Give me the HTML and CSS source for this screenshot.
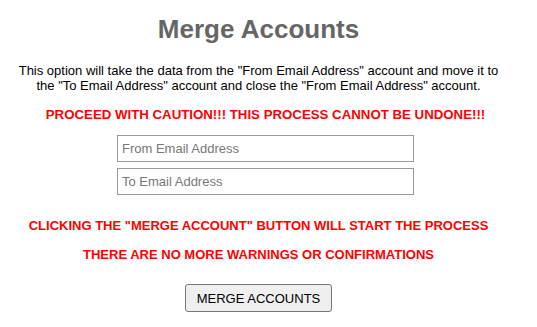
FILE: index.html
```html
<!DOCTYPE html>
<html lang="en">
<head>
    <meta charset="UTF-8">
    <title>Merge Accounts</title>
    <link rel="stylesheet" href="styles.css">
</head>
<body>
    <div class="merge-page">
        <h1 class="title">Merge Accounts</h1>
        <p class="intro">This option will take the data from the "From Email Address" account and move it to the "To Email Address" account and close the "From Email Address" account.</p>

        <form class="merge-form" onsubmit="return false;">
            <div class="caution-block">
                <p class="warning">PROCEED WITH CAUTION!!! THIS PROCESS CANNOT BE UNDONE!!!</p>
                <input type="text" class="email-input first" placeholder="From Email Address">
                <input type="text" class="email-input" placeholder="To Email Address">
            </div>

            <p class="warning warning-gap">CLICKING THE "MERGE ACCOUNT" BUTTON WILL START THE PROCESS</p>
            <p class="warning">THERE ARE NO MORE WARNINGS OR CONFIRMATIONS</p>

            <button type="submit" class="merge-button">MERGE ACCOUNTS</button>
        </form>
    </div>
</body>
</html>
```

FILE: styles.css
```css
body {
    font-family: "Liberation Sans", Arial, sans-serif;
    margin: 0;
    padding: 0 8px;
    color: #000;
    background: #fff;
}

.merge-page {
    width: 501px;
    text-align: center;
}

.title {
    font-size: 26px;
    font-weight: bold;
    color: #666;
    margin: 14px 0 0;
    line-height: 30px;
}

.intro {
    font-size: 13px;
    line-height: 15px;
    margin: 19px 0 0;
}

.warning {
    font-size: 13px;
    font-weight: bold;
    color: #ff0000;
    margin: 14px 0 0;
    line-height: 15px;
}

.merge-form {
    display: flex;
    flex-direction: column;
    align-items: center;
}

.caution-block {
    display: flex;
    flex-direction: column;
    align-items: center;
    padding-left: 14px;
}

.caution-block .warning {
    font-size: 13.25px;
}

.email-input {
    box-sizing: border-box;
    width: 297px;
    height: 27px;
    margin-top: 6px;
    padding: 0 4px;
    border: 1px solid #999;
    font-family: "Liberation Sans", Arial, sans-serif;
    font-size: 13px;
    color: #333;
}

.email-input.first {
    margin-top: 13px;
}

.email-input::placeholder {
    color: #777;
}

.warning-gap {
    margin-top: 23px;
}

.merge-button {
    margin-top: 22px;
    width: 147px;
    height: 28px;
    font-family: "Liberation Sans", Arial, sans-serif;
    font-size: 13px;
    color: #000;
    background: #efefef;
    border: 1px solid #767676;
    border-radius: 3px;
}
```
